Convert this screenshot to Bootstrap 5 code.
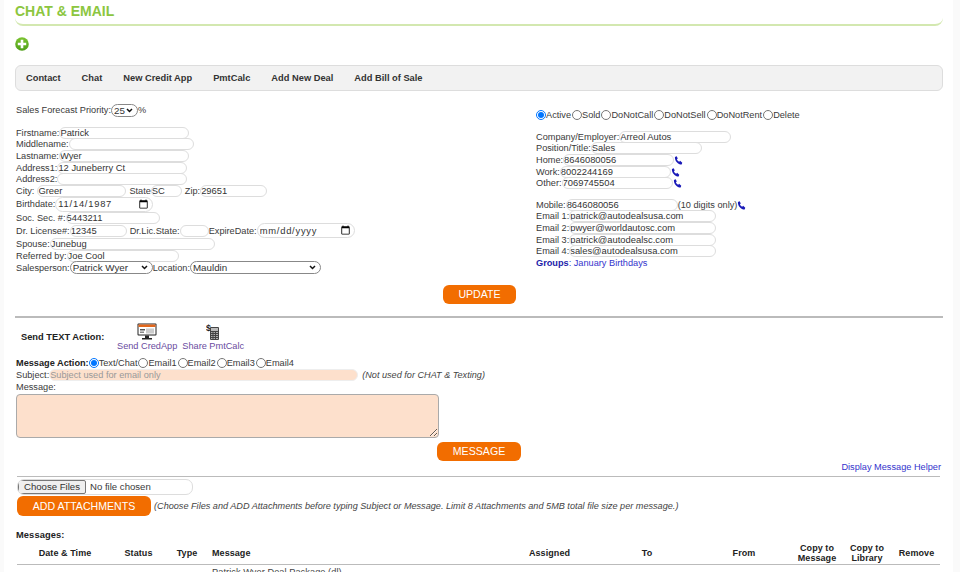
<!DOCTYPE html>
<html lang="en"><head><meta charset="utf-8">
<title>Chat &amp; Email</title>
<link href="https://cdn.jsdelivr.net/npm/bootstrap@5.3.0/dist/css/bootstrap.min.css" rel="stylesheet">
<style>
html,body{height:572px;overflow:hidden}
body{font-family:"Liberation Sans",Arial,sans-serif;font-size:9.2px;line-height:12px;color:#3a3a3a;background:linear-gradient(to right,#fafafa 0 4px,#fff 4px 953px,#fafafa 953px)}
.pagewrap{padding:0 17px 0 15px}
.ttl{color:#8cc63f;font-size:14px;font-weight:700;line-height:16px;margin:0;padding:3px 0 6px;height:26px;border-bottom:2px solid #d3e8b0;border-radius:0 0 8px 8px}
.addrow{height:39px;padding-top:11px}
.navbox{height:26px;background:#f2f2f2;border:1px solid #ddd;border-radius:6px;padding:0 10px;gap:21px;margin-bottom:13px}
.navbox a{font-size:9.3px;font-weight:700;color:#333;text-decoration:none}
.lcol{width:520px;padding-left:1px}
.rcol{width:400px;padding-left:1px}
.ln{height:11.6px;display:flex;align-items:center;white-space:nowrap}
.gapb{margin-bottom:11px}
.gapc{margin-bottom:10px}
input.tx{font:inherit;font-size:9.4px;color:#333;border:1px solid #ddd;border-radius:8px;height:12px;padding:0;background:#fff;outline:0}
input.dt{font:inherit;font-size:9.4px;color:#333;border:1px solid #ddd;border-radius:8px;height:15px;padding:0 2px;background:#fff;letter-spacing:.75px}
input.dt::-webkit-calendar-picker-indicator{width:11px;height:11px;padding:0;margin:0 1px 0 0;filter:brightness(0)}
select.sl{appearance:none;-webkit-appearance:none;font:inherit;font-size:9.8px;line-height:11px;color:#333;border:1px solid #888;border-radius:8px;height:13px;padding:0 10px 0 2px;outline:0;background:#fff url("data:image/svg+xml,%3Csvg xmlns='http://www.w3.org/2000/svg' width='7' height='5' viewBox='0 0 7 5'%3E%3Cpath d='M1 1l2.500 2.500L6 1' fill='none' stroke='%23111' stroke-width='1.500'/%3E%3C/svg%3E") no-repeat right 4px center}
.r125{height:12.5px}.r135{height:13.5px}.r13{height:13px}.r12{height:12px}
.w130{width:130px}.w125{width:125px}.w89{width:89px}.w31{width:31px}.w67{width:67px}.w98{width:98px}.w94{width:94px}.w57{width:57px}.w29{width:29px}.w165{width:165px}.w112{width:112px}.w83{width:83px}.w131{width:131px}.w111{width:111px}.w147{width:147px}.w27{width:27px}
.ml3{margin-left:3px}
input[type=radio].rd{width:10px;height:10px;margin:0;accent-color:#0075ff}
.radrow{height:11px;margin:5px 0 11px}
.radrow label,.radm label{display:inline-flex;align-items:center;margin-right:1px}
.ph{width:9px;height:9px;margin-top:1px}
.grp{color:#33c}.grp b{color:#22a}
.obtn{background:#f26d00;color:#fff;border:0;border-radius:6px;font-size:10.6px;line-height:19px;height:19px;padding:0;text-align:center;display:block}
.ub{width:73px;margin:11px auto 0 428px}
.sep{border:0;border-top:2px solid #bbb;opacity:1;margin:12px 0 0}
.sendrow{height:36px;padding-left:6px}
.sendlbl{font-size:9.3px;font-weight:700;color:#222;margin-top:13px;width:96px}
.sa{display:flex;flex-direction:column;align-items:center;color:#6a4ba0;text-decoration:none;margin-top:5px;line-height:11px}
.sa svg{display:block;height:17px;margin-bottom:1px}
.sa1{margin-right:5px}
.msgs{padding-left:1px}
.radm{height:12px;margin-top:3px;white-space:nowrap}
.radm b{font-size:9.2px;color:#222}
.subj{font:inherit;width:309px;height:12px;background:#fde0cc;border:1px solid #eee;border-radius:7px;padding:0;color:#888;outline:0}
.subj::placeholder{color:#999;opacity:1}
.hint{font-style:italic;font-size:9.15px;color:#444}
textarea.ta{display:block;width:423px;height:44px;background:#fde0cc;border:1px solid #aaa;border-radius:4px;margin-top:1px}
.mb{width:84px;margin:4px 0 0 421px}
.helper{text-align:right;color:#33c;text-decoration:none;display:block;margin:0 2px 0 0;height:12px;line-height:12px}
.sep2{border:0;border-top:1px solid #bbb;opacity:1;margin:3px 3px 0 2px}
.filebox{width:176px;height:16px;border:1px solid #ddd;border-radius:7px;margin:2px 0 1px 2px;display:flex;align-items:center;overflow:hidden;font-size:9.6px}
.filebtn{height:14px;line-height:12px;background:#efefef;border:1px solid #777;border-radius:2px;padding:0 5px;margin-right:4px;color:#333}
.ab{width:134px;height:20px;line-height:18px;margin:0 3px 0 2px}
.mlabel{font-size:9.3px;font-weight:700;letter-spacing:.1px;color:#222;margin:13px 0 0;line-height:12px}
table.mt{width:923px;margin-left:2px;table-layout:fixed;border-collapse:collapse;font-size:9px;letter-spacing:.07px}
table.mt th{font-weight:700;color:#222;text-align:center;padding:1px 0 0;height:24px;line-height:10px;border-bottom:1px solid #bbb;vertical-align:middle}
table.mt td{font-size:9.2px;padding:2px 0 0 2px;line-height:10px;color:#444}
table.mt th.tl{text-align:left;padding-left:2px}
.c1{width:96px}.c2{width:51px}.c3{width:46px}.c4{width:290px}.c5{width:99px}.c6{width:96px}.c7{width:98px}.c8{width:48px}.c9{width:52px}.c10{width:47px}
</style></head>
<body>
<div class="pagewrap">
  <h5 class="ttl">CHAT &amp; EMAIL</h5>
  <div class="addrow">
    <svg width="14" height="14" viewBox="0 0 14 14" class="d-block"><defs><linearGradient id="gp" x1="0" y1="0" x2="0" y2="1"><stop offset="0" stop-color="#7cc431"/><stop offset="1" stop-color="#4f9f18"/></linearGradient></defs><circle cx="7" cy="7" r="6.800" fill="url(#gp)"/><path d="M5.700 2.800h2.600v2.900h2.900v2.600H8.300v2.900H5.700V8.300H2.800V5.700h2.900z" fill="#fff"/></svg>
  </div>
  <div class="navbox d-flex align-items-center">
    <a href="#">Contact</a><a href="#">Chat</a><a href="#">New Credit App</a><a href="#">PmtCalc</a><a href="#">Add New Deal</a><a href="#">Add Bill of Sale</a>
  </div>
  <div class="d-flex">
    <div class="lcol">
      <div class="ln gapb r12">Sales Forecast Priority:<select class="sl w27"><option>25</option></select>%</div>
      <div class="ln">Firstname:<input class="tx w130" value="Patrick"></div>
      <div class="ln">Middlename:<input class="tx w125"></div>
      <div class="ln">Lastname:<input class="tx w130" value="Wyer"></div>
      <div class="ln">Address1:<input class="tx w130" value="12 Juneberry Ct"></div>
      <div class="ln">Address2:<input class="tx w130"></div>
      <div class="ln r125">City: <input class="tx w89 ml3" value="Greer"><span class="ml3">State</span><input class="tx w31" value="SC"><span class="ml3">Zip:</span><input class="tx w67" value="29651"></div>
      <div class="ln r135">Birthdate:<input class="dt w98" type="date" value="1987-11-14"></div>
      <div class="ln r135">Soc. Sec. #:<input class="tx w94" value="5443211"></div>
      <div class="ln r13">Dr. License#:<input class="tx w57" value="12345"><span class="ml3">Dr.Lic.State:</span><input class="tx w29"><span>ExpireDate:</span><input class="dt w98" type="date"></div>
      <div class="ln r125">Spouse:<input class="tx w165" value="Junebug"></div>
      <div class="ln r12">Referred by:<input class="tx w112" value="Joe Cool"></div>
      <div class="ln r12">Salesperson:<select class="sl w83"><option>Patrick Wyer</option></select>Location:<select class="sl w131"><option>Mauldin</option></select></div>
    </div>
    <div class="rcol">
      <div class="radrow d-flex">
        <label><input class="rd" type="radio" name="st" checked>Active</label><label><input class="rd" type="radio" name="st">Sold</label><label><input class="rd" type="radio" name="st">DoNotCall</label><label><input class="rd" type="radio" name="st">DoNotSell</label><label><input class="rd" type="radio" name="st">DoNotRent</label><label><input class="rd" type="radio" name="st">Delete</label>
      </div>
      <div class="ln">Company/Employer:<input class="tx w112" value="Arreol Autos"></div>
      <div class="ln">Position/Title:<input class="tx w111" value="Sales"></div>
      <div class="ln">Home:<input class="tx w111" value="8646080056"><svg class="ph" viewBox="0 0 10 10"><path d="M1 1l2-.6 1.200 2.300-1 1c.5 1.300 1.300 2.100 2.600 2.600l1-1L9.200 7.500 8.500 9.500C4.500 9.500.8 5.500 1 1z" fill="#1a1ab8"/></svg></div>
      <div class="ln">Work:<input class="tx w111" value="8002244169"><svg class="ph" viewBox="0 0 10 10"><path d="M1 1l2-.6 1.200 2.300-1 1c.5 1.300 1.300 2.100 2.600 2.600l1-1L9.200 7.500 8.500 9.500C4.500 9.500.8 5.500 1 1z" fill="#1a1ab8"/></svg></div>
      <div class="ln gapc">Other:<input class="tx w111" value="7069745504"><svg class="ph" viewBox="0 0 10 10"><path d="M1 1l2-.6 1.200 2.300-1 1c.5 1.300 1.300 2.100 2.600 2.600l1-1L9.200 7.500 8.500 9.500C4.500 9.500.8 5.500 1 1z" fill="#1a1ab8"/></svg></div>
      <div class="ln">Mobile:<input class="tx w112" value="8646080056">(10 digits only)<svg class="ph" viewBox="0 0 10 10"><path d="M1 1l2-.6 1.200 2.300-1 1c.5 1.300 1.300 2.100 2.600 2.600l1-1L9.200 7.500 8.500 9.500C4.500 9.500.8 5.500 1 1z" fill="#1a1ab8"/></svg></div>
      <div class="ln">Email 1:<input class="tx w147" value="patrick@autodealsusa.com"></div>
      <div class="ln">Email 2:<input class="tx w147" value="pwyer@worldautosc.com"></div>
      <div class="ln">Email 3:<input class="tx w147" value="patrick@autodealsc.com"></div>
      <div class="ln">Email 4:<input class="tx w147" value="sales@autodealsusa.com"></div>
      <div class="ln grp"><b>Groups</b>: January Birthdays</div>
    </div>
  </div>
  <button class="obtn ub" type="button">UPDATE</button>
  <hr class="sep">
  <div class="sendrow d-flex">
    <div class="sendlbl">Send TEXT Action:</div>
    <a class="sa sa1" href="#">
      <svg viewBox="0 0 20 17" width="20"><rect x=".5" y=".5" width="19" height="12" rx="1" fill="#222"/><rect x="1.500" y="1.500" width="17" height="10" fill="#fff"/><rect x="1.500" y="1.500" width="17" height="2.500" fill="#e2671c"/><rect x="3" y="6" width="5" height="1.500" fill="#555"/><rect x="3" y="8.500" width="4" height="1.500" fill="#888"/><rect x="9" y="5.500" width="8" height="5" fill="#ccc"/><rect x="8" y="12.500" width="4" height="2.500" fill="#222"/><rect x="5" y="15" width="10" height="1.500" fill="#222"/></svg>
      Send CredApp</a>
    <a class="sa" href="#">
      <svg viewBox="0 0 14 17" width="14"><text x="0" y="7.500" font-size="9" font-weight="700" fill="#222">$</text><rect x="4" y="4" width="9" height="13" rx="1" fill="#444"/><rect x="5" y="5" width="7" height="3" fill="#bbb"/><path d="M5 9.500h7M5 11.500h7M5 13.500h7M5 15.500h7" stroke="#ccc" stroke-width=".8"/><path d="M7 9v7M9.500 9v7" stroke="#444"/></svg>
      Share PmtCalc</a>
  </div>
  <div class="msgs">
    <div class="radm d-flex align-items-center"><b>Message Action:</b><label><input class="rd" type="radio" name="ma" checked>Text/Chat</label><label><input class="rd" type="radio" name="ma">Email1</label><label><input class="rd" type="radio" name="ma">Email2</label><label><input class="rd" type="radio" name="ma">Email3</label><label><input class="rd" type="radio" name="ma">Email4</label></div>
    <div class="ln r12">Subject:<input class="subj" placeholder="Subject used for email only"><span class="hint ms-1">(Not used for CHAT &amp; Texting)</span></div>
    <div class="ln r12">Message:</div>
    <textarea class="ta"></textarea>
    <button class="obtn mb" type="button">MESSAGE</button>
    <a class="helper" href="#">Display Message Helper</a>
  </div>
  <hr class="sep2">
  <div class="filebox"><span class="filebtn">Choose Files</span>No file chosen</div>
  <div class="d-flex align-items-center"><button class="obtn ab" type="button">ADD ATTACHMENTS</button><span class="hint">(Choose Files and ADD Attachments before typing Subject or Message. Limit 8 Attachments and 5MB total file size per message.)</span></div>
  <div class="mlabel msgs">Messages:</div>
  <table class="mt">
    <colgroup><col class="c1"><col class="c2"><col class="c3"><col class="c4"><col class="c5"><col class="c6"><col class="c7"><col class="c8"><col class="c9"><col class="c10"></colgroup>
    <thead><tr><th>Date &amp; Time</th><th>Status</th><th>Type</th><th class="tl">Message</th><th>Assigned</th><th>To</th><th>From</th><th>Copy to<br>Message</th><th>Copy to<br>Library</th><th>Remove</th></tr></thead>
    <tbody><tr><td></td><td></td><td></td><td colspan="3">Patrick Wyer Deal Package (dl)</td><td></td><td></td><td></td></tr></tbody>
  </table>
</div>
<script src="https://cdn.jsdelivr.net/npm/bootstrap@5.3.0/dist/js/bootstrap.bundle.min.js"></script>
</body></html>
